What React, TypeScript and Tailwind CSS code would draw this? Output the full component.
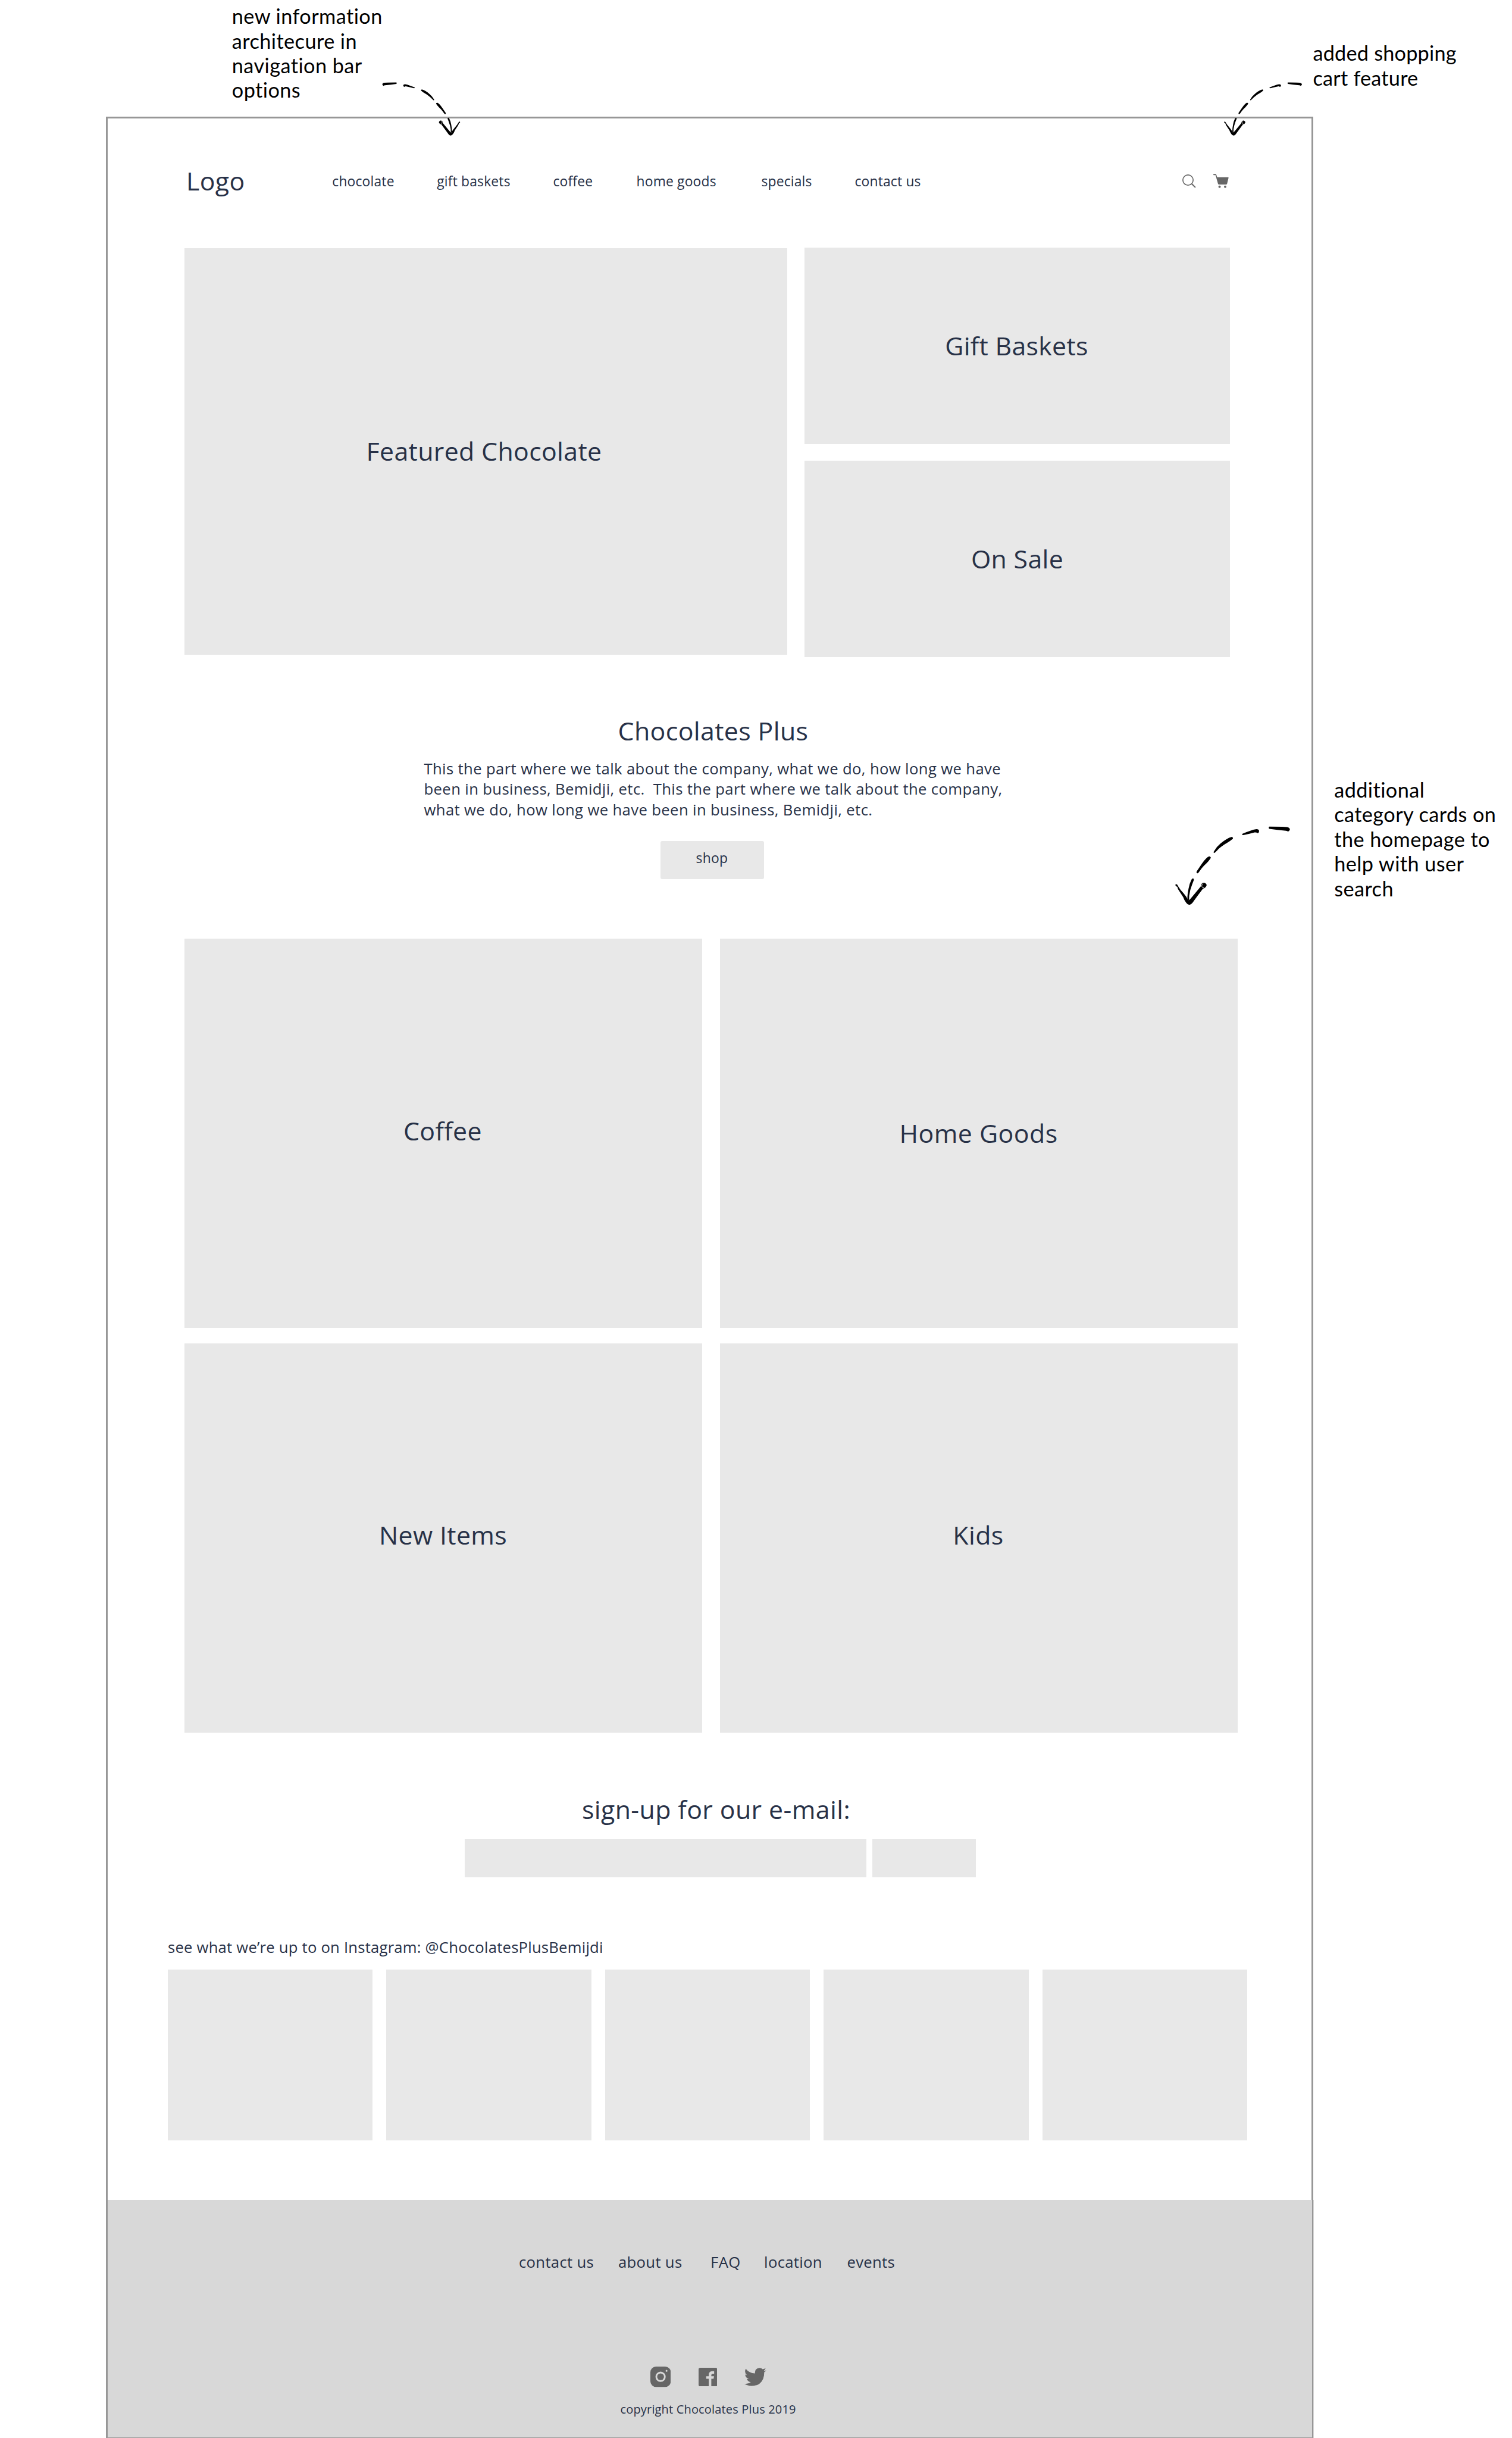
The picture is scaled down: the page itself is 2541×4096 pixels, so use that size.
import React from "react";
import clsx from "clsx";

const navItems = [
  { label: "chocolate", width: "w-[176px]" },
  { label: "gift baskets", width: "w-[195.2px]" },
  { label: "coffee", width: "w-[140.1px]" },
  { label: "home goods", width: "w-[209.9px]" },
  { label: "specials", width: "w-[157px]" },
  { label: "contact us", width: "w-[120px]" },
];

const footerLinks = [
  { label: "contact us", width: "w-[167px]" },
  { label: "about us", width: "w-[155.1px]" },
  { label: "FAQ", width: "w-[90px]" },
  { label: "location", width: "w-[139.4px]" },
  { label: "events", width: "w-[90px]" },
];

const categories = [
  { label: "Coffee", className: "pb-[9px] pr-[2px] tracking-[0.4px]" },
  { label: "Home Goods", className: "pb-[1px] pr-[1px] tracking-[0.45px]" },
  { label: "New Items", className: "pb-[9px] pr-[1px] tracking-[0.35px]" },
  { label: "Kids", className: "pb-[9px] pr-[2px] tracking-[0.4px]" },
];

function Arrow({ className }: { className?: string }) {
  return (
    <svg viewBox="66 163 271 186" preserveAspectRatio="none" className={clsx("absolute", className)} fill="#000">
      <path d="M286.2 165.5Q286 164 288 164L317.4 164.3L329 165Q335.5 166 336 170.7Q335 174.5 331.6 175.7Q329.5 173.8 326.7 173.7L306.4 171.7L287.5 169.3Q286 169 286.2 165.5Z" />
      <path d="M223.8 183.7Q223 182 224.4 181Q232 177.5 240.8 174.7Q250 170.5 257.2 170Q263 170 263.5 174.5Q263.5 178.5 259.9 179.3Q256.5 177 252.8 177.7L240.8 180.7L226.5 184Z" />
      <path d="M156.5 225.3Q156 223 158.7 220Q164 211 172.4 204Q179 198 186 194Q193 189.5 199.2 188.3Q203 190 201.9 192.3Q196 197.5 188.8 201.7Q181 206 174 211.7Q168 216 164.2 220.7L158.7 226Z" />
      <path d="M116.6 273.3Q115.8 271 116.6 269.3L128.6 251.7Q134 243.5 139.5 238.3Q143 234.5 146.1 234Q150.2 235 149.9 237.7Q145.5 244.5 139.5 250.7Q133.5 256 128.6 261.7L121.5 271.7Q119.5 274.5 118.2 274Z" />
      <path d="M107.3 286Q105 287 104 289.3Q99.5 298 97.4 310Q94.5 324 94.7 333.3L98.5 340Q98 326 101.5 313.3Q105.5 300 110 289.3Q110 286 107.3 286Z" />
      <path d="M66.2 301.7Q67 299.3 69 299.7Q71.5 301 72.2 303.3Q78 313 84.8 320Q92 328 97.4 338Q102 334.5 106.7 328.3L125.9 305Q127 300 129.1 297.3Q131.5 295.6 134.6 296Q139.5 298 140 301.7Q139.5 305.5 136.8 307.3Q134.5 309.5 131.3 310L117.6 328.3L106.7 343.3Q103 348 99 348Q95 347.5 91.9 343.3Q87 337 84.8 330L73.9 313.3Q71.5 310 71.1 306Q68 305.5 66.2 301.7Z" />
      <path d="M131.5 298Q126 303.5 130.5 307.5Q131.5 309 133.5 307.5" fill="none" stroke="#fff" strokeWidth="1.3" />
    </svg>
  );
}

function SearchIcon() {
  return (
    <svg viewBox="0 0 32 32" className="size-[22.9px]" fill="none" stroke="#666">
      <circle cx="13.3" cy="13.4" r="12.1" strokeWidth="2.3" />
      <path d="M22 22L31 31" strokeWidth="2.8" />
    </svg>
  );
}

function CartIcon() {
  return (
    <svg viewBox="0 0 36 34" className="h-[24.3px] w-[25.7px]" fill="#666">
      <path d="M1.4 .3H5.2Q6.6 .3 7 1.6L9.2 8.2H34.8Q36.2 8.2 35.9 9.6L32.6 23Q32 25.2 29.8 25.2H13.6Q11.6 25.2 11 23L5.3 3H1.4Q0 3 0 1.6Q0 .3 1.4 .3Z" />
      <circle cx="14.8" cy="30.6" r="2.8" />
      <circle cx="28" cy="30.6" r="2.8" />
    </svg>
  );
}

function InstagramIcon() {
  return (
    <svg viewBox="0 0 144 144" className="size-[34.3px]" fill="#666">
      <path
        fillRule="evenodd"
        d="M40 0H104A40 40 0 0 1 144 40V104A40 40 0 0 1 104 144H40A40 40 0 0 1 0 104V40A40 40 0 0 1 40 0ZM72 36A36 36 0 1 0 72 108A36 36 0 1 0 72 36ZM114 23.500A6.500 6.500 0 1 0 114 36.500A6.500 6.500 0 1 0 114 23.500Z"
      />
      <circle cx="72" cy="72" r="24" />
    </svg>
  );
}

function FacebookIcon() {
  return (
    <svg viewBox="0 0 132 132" className="size-[31.4px]" fill="#666">
      <path d="M12 0H120Q132 0 132 12V120Q132 132 120 132H90V78H106L109 60H90V52Q90 42 100 42H110V24H96Q72 25 72 50V60H54V78H72V132H12Q0 132 0 120V12Q0 0 12 0Z" />
    </svg>
  );
}

function TwitterIcon() {
  return (
    <svg viewBox="997 211 155 129" className="h-[30.7px] w-[36.900px]" fill="#666">
      <path d="M1151 230Q1144 238 1137 243Q1137 270 1130 288Q1121 310 1105 322Q1084 339 1048 339.500Q1020 339 997 325Q1024 327 1042 313Q1020 308 1014 290Q1021 291 1027 289.500Q1004 280 1002.500 258Q1008 262 1015 262Q1001 252 1002 236Q1002 226 1007 218Q1030 249 1072 251Q1070 236 1078 224Q1088 212 1104 212Q1117 212 1126 221Q1137 220 1147 215.500Q1142 226 1134 233Q1143 232 1151 230Z" />
    </svg>
  );
}

function Card({ label, className }: { label: string; className?: string }) {
  return (
    <div className={clsx("flex items-center justify-center bg-[#e8e8e8] text-[42.85px] leading-[58px]", className)}>
      {label}
    </div>
  );
}

export default function App() {
  return (
    <div className="relative h-[4096px] w-[2541px] overflow-hidden bg-white pl-[178px] pt-[196px] font-['Open_Sans',sans-serif] text-[#273147]">
      <div className="flex h-[3902px] w-[2029px] flex-col border-[3px] border-[#979797]">
        <header className="flex h-[209px] shrink-0 items-center pl-[132px]">
          <div className="w-[244.800px] text-[42.85px] leading-[58px] tracking-[0.34px]">Logo</div>
          <nav className="flex pl-[0.500px] pt-[2px] text-[22.85px] leading-8 tracking-[0.17px]">
            {navItems.map((item) => (
              <a key={item.label} className={clsx("shrink-0 whitespace-nowrap", item.width)}>
                {item.label}
              </a>
            ))}
          </nav>
          <div className="ml-[430.300px] flex items-center gap-[29.5px] pt-px">
            <SearchIcon />
            <CartIcon />
          </div>
        </header>

        <section className="mt-2 flex shrink-0 pl-[129px]">
          <Card label="Featured Chocolate" className="mt-px h-[683px] w-[1013px] pb-[2px] pr-[6px] tracking-[0.34px]" />
          <div className="ml-[29px] flex w-[715px] flex-col gap-[28px]">
            <Card label="Gift Baskets" className="h-[330px] pr-[2px] tracking-[0.3px]" />
            <Card label="On Sale" className="h-[330px] tracking-[0.3px]" />
          </div>
        </section>

        <section className="mt-[94.500px] flex shrink-0 flex-col items-center">
          <h1 className="ml-[12px] text-[42.85px] leading-[58px] tracking-[0.38px]">Chocolates Plus</h1>
          <p className="mt-[18.500px] w-full whitespace-pre pl-[531.500px] text-[25.7px] leading-[34.25px] tracking-[0.36px]">
            {"This the part where we talk about the company, what we do, how long we have\nbeen in business, Bemidji, etc.  This the part where we talk about the company,\nwhat we do, how long we have been in business, Bemidji, etc."}
          </p>
          <button className="ml-[8px] mt-[35px] flex h-[64px] w-[174px] items-center justify-center rounded-[3px] bg-[#e8e8e8] pb-[6px] text-[22.85px] leading-8 tracking-[0.3px]">
            shop
          </button>
        </section>

        <section className="mt-[100.250px] grid shrink-0 grid-cols-[870px_870px] grid-rows-[654px_654px] gap-x-[30px] gap-y-[25.5px] pl-[129px]">
          {categories.map((item) => (
            <Card key={item.label} label={item.label} className={item.className} />
          ))}
        </section>

        <section className="mt-[100.500px] flex shrink-0 flex-col items-center">
          <h2 className="ml-[22px] text-[42.85px] leading-[58px] tracking-[0.4px]">sign-up for our e-mail:</h2>
          <div className="mt-[20.500px] flex gap-[10px] self-start pl-[600px]">
            <div className="h-[64px] w-[675px] bg-[#e8e8e8]" />
            <div className="h-[64px] w-[174px] bg-[#e8e8e8]" />
          </div>
        </section>

        <section className="mt-[100px] shrink-0 pl-[101px]">
          <p className="text-[25.7px] leading-9 tracking-[0.2px]">see what we’re up to on Instagram: @ChocolatesPlusBemijdi</p>
          <div className="mt-[19.800px] flex gap-[23.2px]">
            {[1, 2, 3, 4, 5].map((n) => (
              <div key={n} className="h-[287px] w-[344.3px] bg-[#e8e8e8]" />
            ))}
          </div>
        </section>

        <div className="mt-[100px] w-[2024px] shrink-0 grow bg-[#d8d8d8]">
          <footer className="flex flex-col pt-[86.500px]">
            <div className="flex pl-[691px] text-[25.7px] leading-9 tracking-[0.3px]">
              {footerLinks.map((item) => (
                <a key={item.label} className={clsx("shrink-0 whitespace-nowrap", item.width)}>
                  {item.label}
                </a>
              ))}
            </div>
            <div className="mt-[157.500px] flex h-[34.3px] items-center pl-[911.7px]">
              <InstagramIcon />
              <div className="pl-[47.100px]">
                <FacebookIcon />
              </div>
              <div className="pl-[45.700px]">
                <TwitterIcon />
              </div>
            </div>
            <p className="mt-[23px] pl-[861.500px] text-[20px] leading-7 tracking-[0.167px]">copyright Chocolates Plus 2019</p>
          </footer>
        </div>
      </div>

      {/* Footer fill peeks past the frame's right edge */}
      <div className="absolute left-[2207px] top-[3696px] h-[400px] w-px bg-[#d8d8d8]" />

      <div className="absolute left-[389.800px] top-[6.200px] whitespace-pre font-['Lato',sans-serif] text-[34.28px] leading-[41.42px] tracking-[0.43px] text-black">
        {"new information\narchitecure in\nnavigation bar\noptions"}
      </div>
      <div className="absolute left-[2206.500px] top-[68.300px] whitespace-pre font-['Lato',sans-serif] text-[34.28px] leading-[41.42px] tracking-[0.2px] text-black">
        {"added shopping\ncart feature"}
      </div>
      <div className="absolute left-[2242.200px] top-[1305.900px] whitespace-pre font-['Lato',sans-serif] text-[34.28px] leading-[41.42px] tracking-[0.42px] text-black">
        {"additional\ncategory cards on\nthe homepage to\nhelp with user\nsearch"}
      </div>

      <Arrow className="left-[641.500px] top-[137.500px] h-[90.300px] w-[131.500px] -scale-x-100" />
      <Arrow className="left-[2056.500px] top-[137.500px] h-[90.300px] w-[131.500px]" />
      <Arrow className="left-[1975.400px] top-[1387.600px] h-[132.800px] w-[193.500px]" />
    </div>
  );
}
